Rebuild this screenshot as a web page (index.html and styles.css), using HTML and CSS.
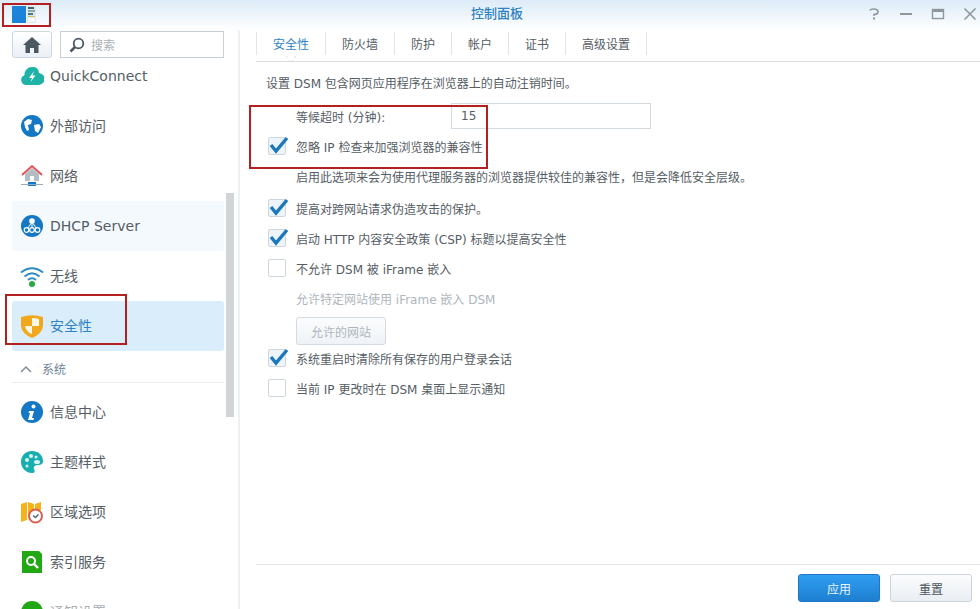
FILE: index.html
```html
<!DOCTYPE html>
<html>
<head>
    <meta charset="UTF-8">
    <meta name="viewport" content="width=device-width, initial-scale=1.0">
    <title>控制面板</title>
    <link rel="stylesheet" href="styles.css">
</head>
<body>
    <div class="window">
        <header class="titlebar">
            <svg class="app-logo" width="26" height="20" viewBox="0 0 26 20">
                <rect x="0" y="2" width="14" height="17" fill="#1b84d8"/>
                <rect x="15" y="2" width="9" height="17" fill="#dfe7ec"/>
                <rect x="16" y="3" width="6" height="2" fill="#3f6474"/>
                <rect x="16" y="6" width="7" height="2" fill="#7fb0a0"/>
                <rect x="16" y="9" width="5" height="2" fill="#4f7484"/>
                <rect x="16" y="12" width="7" height="1" fill="#d9c25f"/>
                <rect x="16" y="14" width="7" height="4" fill="#f7f9fa"/>
            </svg>
            <h1 class="title">控制面板</h1>
            <div class="win-buttons">
                <svg width="14" height="14" viewBox="0 0 14 14"><path d="M3 3.500Q3.500 2 7 2T11 4.500 7 7.500V9" fill="none" stroke="#8f979e" stroke-width="1.600"/><rect x="6" y="10.500" width="2" height="2" fill="#8f979e"/></svg>
                <svg width="14" height="14" viewBox="0 0 14 14"><rect x="1" y="6" width="12" height="2" fill="#8f979e"/></svg>
                <svg width="14" height="14" viewBox="0 0 14 14"><rect x="1.500" y="2.500" width="11" height="9" fill="none" stroke="#8f979e" stroke-width="1.400"/><rect x="1" y="2" width="12" height="3" fill="#8f979e"/></svg>
                <svg width="14" height="14" viewBox="0 0 14 14"><path d="M1.500 1.500L12.500 12.500M12.500 1.500L1.500 12.500" stroke="#8f979e" stroke-width="1.600"/></svg>
            </div>
        </header>

        <div class="body-row">
            <aside class="sidebar">
                <div class="toolbar">
                    <button class="home-btn">
                        <svg width="18" height="16" viewBox="0 0 18 16"><path d="M9 0L0 8h2.500v8h4.500v-5h4v5h4.500V8H18z" fill="#4c5864"/></svg>
                    </button>
                    <div class="search">
                        <svg width="16" height="16" viewBox="0 0 16 16"><circle cx="9.500" cy="6.500" r="4.800" fill="none" stroke="#4c5864" stroke-width="1.800"/><path d="M6 10L1.500 14.500" stroke="#4c5864" stroke-width="2.600"/></svg>
                        <span>搜索</span>
                    </div>
                </div>
                <nav class="nav">
                    <div class="nav-item">
                        <svg width="24" height="24" viewBox="0 0 24 24"><path d="M6 21a5 5 0 0 1-1.500-9.700A7.500 7.500 0 0 1 12 3a6 6 0 0 1 7 6 6 6 0 0 1-1 12z" fill="#1eb3a6"/><path d="M14 7l-5 7h3l-1.500 4 5-6.500h-3z" fill="#fff"/></svg>
                        <span>QuickConnect</span>
                    </div>
                    <div class="nav-item">
                        <svg width="24" height="24" viewBox="0 0 24 24"><circle cx="12" cy="12" r="11" fill="#1478c4"/><path d="M4 8l4-3 4 1-1 4-3 1 1 5-2 1-2-4zM14 11l5-1 2 3-3 6-3-2z" fill="#fff"/></svg>
                        <span class="cn">外部访问</span>
                    </div>
                    <div class="nav-item">
                        <svg width="24" height="24" viewBox="0 0 24 24"><path d="M5 10v7h14v-7l-7-6z" fill="#b4bcc6"/><path d="M2 11L12 2l10 9" fill="none" stroke="#e2545b" stroke-width="2"/><rect x="10" y="12" width="4" height="5" fill="#fff"/><rect x="8" y="18" width="8" height="4" fill="#1478c4"/><rect x="1" y="20" width="22" height="1" fill="#9ab"/></svg>
                        <span class="cn">网络</span>
                    </div>
                    <div class="nav-item hover">
                        <svg width="24" height="24" viewBox="0 0 24 24"><circle cx="12" cy="12" r="11" fill="#1478c4"/><circle cx="12" cy="7" r="2.800" fill="#fff"/><path d="M12 8L6.500 16M12 8v8M12 8l5.500 8" stroke="#fff"/><g fill="#1478c4" stroke="#fff" stroke-width="1.200"><circle cx="6.500" cy="16" r="2.300"/><circle cx="12" cy="16" r="2.300"/><circle cx="17.500" cy="16" r="2.300"/></g></svg>
                        <span>DHCP Server</span>
                    </div>
                    <div class="nav-item">
                        <svg width="24" height="24" viewBox="0 0 24 24"><g fill="none" stroke="#2b8ac4" stroke-width="2"><path d="M1 8.500Q12 0 23 8.500"/><path d="M4.500 12.500Q12 6 19.500 12.500"/><path d="M8 16Q12 12.500 16 16"/></g><circle cx="12" cy="20" r="3" fill="#27a844"/></svg>
                        <span class="cn">无线</span>
                    </div>
                    <div class="nav-item active">
                        <svg width="24" height="24" viewBox="0 0 24 24"><path d="M1 3Q12 -0.500 23 3V12Q22 20 12 24 2 20 1 12z" fill="#f2a81d"/><path d="M12 4Q16 4 19 5V12H12zM12 12V20Q6 18 5 12z" fill="#fff" opacity=".9"/></svg>
                        <span class="cn">安全性</span>
                    </div>
                    <div class="nav-section">
                        <svg width="12" height="8" viewBox="0 0 12 8"><path d="M1 7l5-5 5 5" fill="none" stroke="#7d8c98" stroke-width="1.500"/></svg>
                        <span>系统</span>
                    </div>
                    <div class="nav-item">
                        <svg width="24" height="24" viewBox="0 0 24 24"><circle cx="12" cy="12" r="11" fill="#1478c4"/><circle cx="13.500" cy="6.500" r="2" fill="#fff"/><path d="M9 11h5l-2 7h2l-.5 2H8l2-7H8.500z" fill="#fff"/></svg>
                        <span class="cn">信息中心</span>
                    </div>
                    <div class="nav-item">
                        <svg width="24" height="24" viewBox="0 0 24 24"><path d="M12 1C5 1 1 6 1 12s5 11 11 11c3 0 3-2 2-4s1-4 4-4 5-1 5-4C23 5 18 1 12 1z" fill="#17aeb0"/><g fill="#d8f4f2"><circle cx="7" cy="10" r="2"/><circle cx="11" cy="6" r="2"/><circle cx="16" cy="7" r="1.500"/><circle cx="7" cy="16" r="1.500"/><ellipse cx="17" cy="12" rx="3" ry="2"/></g></svg>
                        <span class="cn">主题样式</span>
                    </div>
                    <div class="nav-item">
                        <svg width="24" height="24" viewBox="0 0 24 24"><path d="M1 4l6-2v18l-6 2zM8 2l6 2v8l-6 6zM15 4l6-2v8l-6 1z" fill="#f6b21b"/><circle cx="15.500" cy="16" r="6.500" fill="#fff" stroke="#d9604f" stroke-width="2"/><path d="M13 15.500l2.500 2 3-3" fill="none" stroke="#4c6a80" stroke-width="1.500"/></svg>
                        <span class="cn">区域选项</span>
                    </div>
                    <div class="nav-item">
                        <svg width="24" height="24" viewBox="0 0 24 24"><path d="M2 1h17l3 3v19H2z" fill="#22a815"/><circle cx="11" cy="11" r="4" fill="none" stroke="#fff" stroke-width="2"/><path d="M14 14l4 4" stroke="#fff" stroke-width="2.400"/></svg>
                        <span class="cn">索引服务</span>
                    </div>
                    <div class="nav-item faded">
                        <svg width="24" height="24" viewBox="0 0 24 24"><circle cx="12" cy="12" r="11" fill="#22a815"/></svg>
                        <span class="cn">通知设置</span>
                    </div>
                </nav>
                <div class="scrollbar"></div>
            </aside>

            <main class="content">
                <div class="tabs">
                    <div class="tab active">安全性</div>
                    <div class="tab">防火墙</div>
                    <div class="tab">防护</div>
                    <div class="tab">帐户</div>
                    <div class="tab">证书</div>
                    <div class="tab last">高级设置</div>
                    <div class="tab-notch"></div>
                </div>

                <div class="form">
                    <p class="intro">设置 DSM 包含网页应用程序在浏览器上的自动注销时间。</p>

                    <div class="field">
                        <label>等候超时 (分钟):</label>
                        <input class="text-input" type="text" value="15">
                    </div>
                    <div class="check-row">
                        <span class="checkbox on"><svg width="22" height="20" viewBox="0 0 22 20"><path d="M3 10l5 6L19 3" fill="none" stroke="#1b78bd" stroke-width="3.400"/></svg></span>
                        <span>忽略 IP 检查来加强浏览器的兼容性</span>
                    </div>
                    <p class="hint">启用此选项来会为使用代理服务器的浏览器提供较佳的兼容性，但是会降低安全层级。</p>

                    <div class="check-row">
                        <span class="checkbox on"><svg width="22" height="20" viewBox="0 0 22 20"><path d="M3 10l5 6L19 3" fill="none" stroke="#1b78bd" stroke-width="3.400"/></svg></span>
                        <span>提高对跨网站请求伪造攻击的保护。</span>
                    </div>
                    <div class="check-row">
                        <span class="checkbox on"><svg width="22" height="20" viewBox="0 0 22 20"><path d="M3 10l5 6L19 3" fill="none" stroke="#1b78bd" stroke-width="3.400"/></svg></span>
                        <span>启动 HTTP 内容安全政策 (CSP) 标题以提高安全性</span>
                    </div>
                    <div class="check-row">
                        <span class="checkbox"></span>
                        <span>不允许 DSM 被 iFrame 嵌入</span>
                    </div>
                    <p class="hint disabled">允许特定网站使用 iFrame 嵌入 DSM</p>
                    <div class="button-row">
                        <button class="btn-disabled">允许的网站</button>
                    </div>
                    <div class="check-row">
                        <span class="checkbox on"><svg width="22" height="20" viewBox="0 0 22 20"><path d="M3 10l5 6L19 3" fill="none" stroke="#1b78bd" stroke-width="3.400"/></svg></span>
                        <span>系统重启时清除所有保存的用户登录会话</span>
                    </div>
                    <div class="check-row">
                        <span class="checkbox"></span>
                        <span>当前 IP 更改时在 DSM 桌面上显示通知</span>
                    </div>
                </div>

                <footer class="footer">
                    <button class="btn btn-primary">应用</button>
                    <button class="btn">重置</button>
                </footer>
            </main>
        </div>

        <!-- red annotation boxes drawn over the screenshot -->
        <div class="mark mark-logo"></div>
        <div class="mark mark-field"></div>
        <div class="mark mark-nav"></div>
    </div>
</body>
</html>
```
FILE: styles.css
```css
* {
    margin: 0;
    padding: 0;
    box-sizing: border-box;
}

body {
    background-color: #fff;
    font-family: "DejaVu Sans", "Noto Sans CJK SC", sans-serif;
    font-size: 12px;
    color: #555d65;
    overflow: hidden;
}

.window {
    position: relative;
    display: flex;
    flex-direction: column;
    width: 980px;
    height: 609px;
    overflow: hidden;
}

/* Title bar */
.titlebar {
    position: relative;
    display: flex;
    align-items: center;
    justify-content: space-between;
    height: 30px;
    padding: 0 3px 2px 12px;
    background: linear-gradient(#dcebf7, #fff);
}

.title {
    position: absolute;
    left: 471px;
    top: 5px;
    font-size: 13px;
    font-weight: 500;
    line-height: 18px;
    color: #2f82c4;
}

.win-buttons {
    display: flex;
    gap: 18px;
}

.body-row {
    display: flex;
    flex: 1;
    min-height: 0;
}

/* Sidebar */
.sidebar {
    position: relative;
    width: 240px;
    padding-left: 12px;
    border-right: 2px solid #eef1f3;
    overflow: hidden;
}

.toolbar {
    position: relative;
    z-index: 1;
    display: flex;
    gap: 8px;
    width: 212px;
    height: 28px;
    padding-top: 1px;
}

.home-btn {
    display: flex;
    align-items: center;
    justify-content: center;
    width: 40px;
    height: 27px;
    background: linear-gradient(#fff, #eaf0f6);
    border: 1px solid #cdd7e1;
    border-radius: 3px;
}

.search {
    display: flex;
    align-items: center;
    gap: 6px;
    width: 164px;
    height: 27px;
    padding-left: 8px;
    background-color: #fff;
    border: 1px solid #c6ced6;
    color: #a9b0b6;
}

.nav {
    width: 212px;
    margin-top: -7px;
}

.nav-item {
    display: flex;
    align-items: center;
    gap: 6px;
    height: 50px;
    padding-left: 8px;
    border-radius: 3px;
    font-size: 14px;
}

/* CJK glyphs sit a little low next to the icons */
.nav-item .cn {
    margin-bottom: 2px;
}

.nav-item.hover {
    background-color: #f4f9fe;
}

.nav-item.active {
    background-color: #d9edfb;
    color: #2f82c4;
}

.nav-item.faded span {
    opacity: .5;
}

.nav-section {
    display: flex;
    align-items: center;
    gap: 10px;
    height: 32px;
    margin-bottom: 4px;
    padding: 4px 0 0 8px;
    border-bottom: 1px solid #e8edf1;
    color: #6d8396;
}

.scrollbar {
    position: absolute;
    left: 226px;
    top: 163px;
    width: 8px;
    height: 224px;
    background-color: #d0d5d8;
}

/* Content */
.content {
    display: flex;
    flex-direction: column;
    flex: 1;
    padding-left: 16px;
    min-width: 0;
}

.tabs {
    position: relative;
    display: flex;
    height: 32px;
    padding: 2px 0 6px;
    border-bottom: 1px solid #d9dee2;
}

.tab {
    display: flex;
    align-items: center;
    padding: 0 16px;
    border-left: 1px solid #e1e5e9;
}

.tab.last {
    border-right: 1px solid #e1e5e9;
}

.tab.active {
    color: #2f82c4;
}

.tab-notch {
    position: absolute;
    left: 30px;
    bottom: -1px;
    width: 10px;
    height: 6px;
    background: linear-gradient(to top right, transparent 47%, #d9dee2 47%, #d9dee2 53%, #fff 53%) left / 5px 6px no-repeat,
                linear-gradient(to top left, transparent 47%, #d9dee2 47%, #d9dee2 53%, #fff 53%) right / 5px 6px no-repeat;
}

.form {
    flex: 1;
    padding: 9px 0 0 10px;
}

.intro {
    height: 26px;
    margin-bottom: 6px;
    line-height: 26px;
}

.field {
    display: flex;
    align-items: center;
    height: 26px;
    margin-bottom: 4px;
    padding-left: 30px;
}

.field label {
    width: 155px;
}

.text-input {
    width: 200px;
    height: 26px;
    padding-left: 9px;
    border: 1px solid #d3dae0;
    font: inherit;
    color: inherit;
    outline: none;
}

.check-row {
    display: flex;
    align-items: center;
    gap: 10px;
    height: 26px;
    margin-bottom: 4px;
    padding-left: 2px;
}

.checkbox {
    width: 18px;
    height: 18px;
    border: 1px solid #cfd6dc;
    border-radius: 2px;
    background-color: #fff;
}

.checkbox.on {
    background-color: #edf4fa;
}

.checkbox svg {
    display: block;
    margin: -3px 0 0 -1px;
}

.hint {
    height: 26px;
    margin: 6px 0 4px;
    padding-left: 30px;
    line-height: 26px;
}

.hint.disabled {
    color: #aeb6bd;
}

.button-row {
    height: 28px;
    padding-left: 30px;
}

.btn-disabled {
    width: 90px;
    height: 28px;
    background: linear-gradient(#fbfcfd, #eff3f7);
    border: 1px solid #d3dae1;
    border-radius: 3px;
    font: inherit;
    color: #aeb6bd;
}

.footer {
    display: flex;
    justify-content: flex-end;
    gap: 10px;
    height: 45px;
    padding: 9px 8px 0 0;
    border-top: 1px solid #e2e5e8;
}

.btn {
    width: 82px;
    height: 28px;
    background: linear-gradient(#fbfcfd, #e9eef3);
    border: 1px solid #ccd3da;
    border-radius: 3px;
    font: inherit;
    color: #4d555c;
}

.btn-primary {
    background: linear-gradient(#2f9ef2, #1e7fd0);
    border-color: #1c78c6;
    color: #e8f5ff;
}

/* Annotations */
.mark {
    position: absolute;
    border: 2px solid #b3201f;
}

.mark-logo {
    left: 2px;
    top: 3px;
    width: 49px;
    height: 24px;
}

.mark-field {
    left: 249px;
    top: 105px;
    width: 239px;
    height: 64px;
}

.mark-nav {
    left: 5px;
    top: 294px;
    width: 122px;
    height: 51px;
}
```
